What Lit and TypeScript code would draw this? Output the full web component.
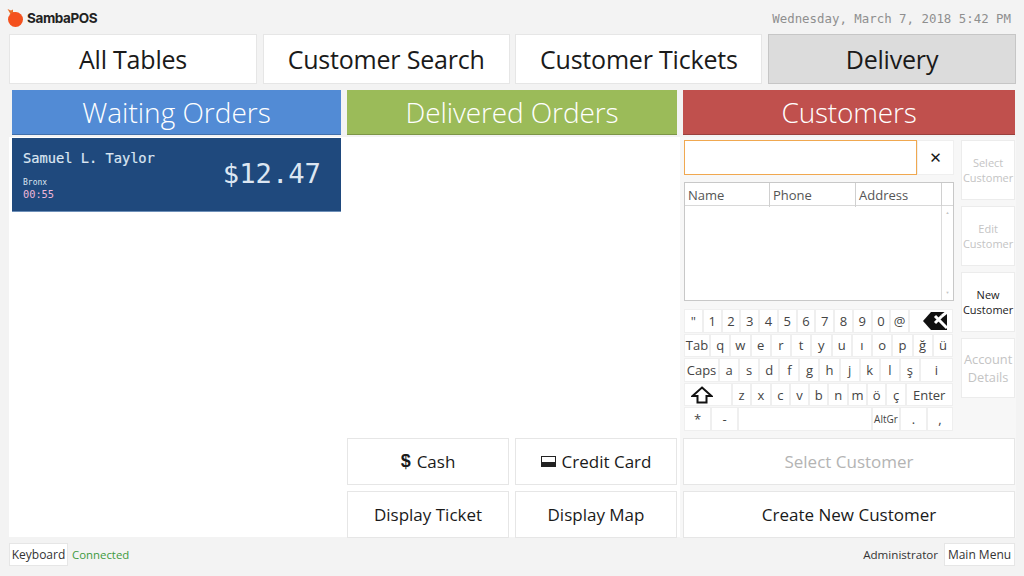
import { LitElement, html, css } from "lit";
import { customElement } from "lit/decorators.js";

type K = [string, number, string?];
const ROWS: K[][] = [
  [['"', 18.75], ...("1234567890@".split("").map((c) => [c, 18.75] as K)), ["⌫", 44, "bs"]],
  [["Tab", 26], ...("qwertyuıopğü".split("").map((c) => [c, 20.25] as K))],
  [["Caps", 35], ...("asdfghjklş".split("").map((c) => [c, 20.1] as K)), ["i", 33]],
  [["⇧", 48, "sh"], ...("zxcvbnmöç".split("").map((c) => [c, 19.3] as K)), ["Enter", 47]],
  [["*", 27], ["-", 27], ["", 134], ["AltGr", 28, "ag"], [".", 27], [",", 26]],
];

@customElement("app-root")
export class AppRoot extends LitElement {
  static styles = css`
    :host { display: block; width: 1024px; height: 576px; background: #f3f3f3; overflow: hidden;
      font-family: "Open Sans", "Noto Sans", sans-serif; color: #1a1a1a; }
    * { box-sizing: border-box; }
    .top { height: 34px; display: flex; justify-content: space-between; padding: 8px 13px 0 7px; }
    .logo { display: flex; align-items: center; gap: 3px; height: 20px; font: 700 13.5px "Inter", "Open Sans", sans-serif; letter-spacing: -0.4px; color: #222; }
    .date { font: 12.4px "DejaVu Sans Mono", monospace; color: #8f8f8f; margin-top: 3px; }
    .nav { display: grid; grid-template-columns: 248px 247px 247px 248px; column-gap: 5.67px; padding-left: 9px; height: 50px; }
    .b { background: #fff; border: 1px solid #e6e6e6; display: flex; align-items: center; justify-content: center; text-align: center; }
    .nav .b { font-size: 25px; letter-spacing: -0.2px; }
    .nav .on { background: #dcdcdc; border-color: #c6c6c6; }
    .heads { display: grid; grid-template-columns: 329px 330px 332px; gap: 6px; margin: 6px 0 0 12px; height: 45px; }
    .h { color: #fff; font-size: 28px; font-weight: 300; display: flex; align-items: center; justify-content: center; border-bottom: 1px solid rgba(0,0,0,.2); }
    .blue { background: #528bd5; } .green { background: #9bbb59; letter-spacing: -0.1px; } .red { background: #c0504d; letter-spacing: -0.2px; }
    .main { display: grid; grid-template-columns: 333px 335px 1fr; margin: 2px 8px 0 9px; height: 400px; background: #fff; }
    .c1 { padding: 1px 0 0 3px; }
    .ticket { width: 329px; height: 74px; background: #1f497d; color: #dce6f2; border-bottom: 1px solid #6d8fb8; padding: 12px 20px 0 11px; display: flex; justify-content: space-between; font-family: "DejaVu Sans Mono", monospace; }
    .name { font-size: 13.7px; line-height: 16px; font-weight: 500; -webkit-text-stroke: 0.2px #dce6f2; }
    .city { font-size: 8px; line-height: 11px; margin-top: 11px; }
    .time { font-size: 10.3px; line-height: 13px; color: #f0b6d8; }
    .amount { font-size: 27.2px; margin-top: 8px; line-height: 32px; }
    .c2 { display: flex; flex-direction: column; justify-content: flex-end; padding: 0 0 0 5px; }
    .pay { display: grid; grid-template-columns: 162px 162px; gap: 6px; grid-auto-rows: 47px; }
    .pay .b { font-size: 17px; gap: 6px; }
    .dollar { font-weight: 700; font-family: "Liberation Sans", sans-serif; font-size: 18px; }
    .cc { width: 15px; height: 11px; border: 1px solid #222; border-bottom-width: 5px; background: #fff; display: block; }
    .c3 { background: #f7f7f7; margin-left: 3px; display: flex; flex-direction: column; padding: 3px 1px 0 3px; width: 336px; }
    .upper { display: flex; height: 298px; }
    .left { width: 271px; margin-left: 1px; }
    .search { display: flex; height: 35px; }
    .input { width: 233px; background: #fff; border: 1px solid #f0a850; }
    .x { width: 37px; background: #fff; border: 1px solid #efefef; display: flex; align-items: center; justify-content: center; font-size: 15px; font-weight: 700; font-family: "DejaVu Sans", sans-serif; }
    .table { margin-top: 7px; height: 119px; width: 270px; background: #fff; border: 1px solid #c8c8c8; display: flex; flex-direction: column; }
    .thead { display: grid; grid-template-columns: 85px 86px 86px 1fr; height: 23px; border-bottom: 1px solid #d8d8d8; font-size: 13px; line-height: 24px; color: #555; }
    .thead span { border-right: 1px solid #d0d0d0; padding-left: 3px; }
    .thead span:last-child { border-right: 0; }
    .tbody { flex: 1; display: flex; justify-content: flex-end; }
    .scroll { width: 12px; border-left: 1px solid #dcdcdc; display: flex; flex-direction: column; justify-content: space-between; align-items: center; color: #c4c4c4; font-size: 4px; line-height: 14px; }
    .kbd { margin-top: 8px; width: 270px; display: flex; flex-direction: column; gap: 1px; }
    .row { display: flex; height: 23.6px; }
    .key { background: #fff; border: 1px solid #efefef; display: flex; align-items: center; justify-content: center; font-size: 13px; color: #444; flex: none; }
    .ag { font-size: 10px; }
    .bs { justify-content: flex-end; padding-right: 5px; }
    .sh { padding-right: 12px; }
    .side { width: 54px; margin-left: 7px; display: flex; flex-direction: column; gap: 6px; }
    .side .b { height: 60px; font-size: 11px; line-height: 15px; color: #c4c4c4; border-color: #ececec; }
    .side .act { color: #222; }
    .side .big { font-size: 12.8px; line-height: 18px; }
    .acts { display: grid; grid-auto-rows: 47px; gap: 6px; width: 332px; }
    .acts .b { font-size: 17px; }
    .acts .dim { color: #b4b4b4; }
    .status { display: flex; justify-content: space-between; align-items: center; height: 39px; padding: 0 9px 4px 9px; font-size: 12px; }
    .status .group { display: flex; align-items: center; gap: 4px; }
    .status .b { height: 23px; font-size: 12px; color: #333; }
    .kb { width: 59px; }
    .mm { width: 71px; }
    .conn { color: #3d9a3d; font-size: 11.4px; }
    .admin { margin-right: 2px; color: #333; font-size: 11.6px; }
  `;

  render() {
    return html`
      <div class="top">
        <div class="logo">
          <svg width="17" height="20" viewBox="0 0 17 20">
            <path d="M0.5 1 L4 2.5 L6 1.5 L6 4 L9.5 4.5 L8 8 L4 7 Z" fill="#e8702a"/>
            <circle cx="8.5" cy="11.5" r="7.5" fill="#f4511e"/>
          </svg>
          <span>SambaPOS</span>
        </div>
        <div class="date">Wednesday, March 7, 2018 5:42 PM</div>
      </div>
      <div class="nav">
        <div class="b">All Tables</div>
        <div class="b">Customer Search</div>
        <div class="b">Customer Tickets</div>
        <div class="b on">Delivery</div>
      </div>
      <div class="heads">
        <div class="h blue">Waiting Orders</div>
        <div class="h green">Delivered Orders</div>
        <div class="h red">Customers</div>
      </div>
      <div class="main">
        <div class="c1">
          <div class="ticket">
            <div>
              <div class="name">Samuel L. Taylor</div>
              <div class="city">Bronx</div>
              <div class="time">00:55</div>
            </div>
            <div class="amount">$12.47</div>
          </div>
        </div>
        <div class="c2">
          <div class="pay">
            <div class="b"><span class="dollar">$</span>Cash</div>
            <div class="b"><span class="cc"></span>Credit Card</div>
            <div class="b">Display Ticket</div>
            <div class="b">Display Map</div>
          </div>
        </div>
        <div class="c3">
          <div class="upper">
            <div class="left">
              <div class="search"><div class="input"></div><div class="x">✕</div></div>
              <div class="table">
                <div class="thead"><span>Name</span><span>Phone</span><span>Address</span><span></span></div>
                <div class="tbody"><div class="scroll"><span>▲</span><span>▼</span></div></div>
              </div>
              <div class="kbd">
                ${ROWS.map((r) => html`<div class="row">${r.map(([t, w, kind]) => html`
                  <div class="key ${kind ?? ""}" style="width:${w}px">${kind === "bs"
                    ? html`<svg width="24" height="20" viewBox="0 0 24 20"><path d="M0 10 L8 1 H24 V19 H8 Z" fill="#111"/><path d="M12 5 L19 12 M19 5 L12 12 M19 12 L24 17 M19 5 L24 1" stroke="#fff" stroke-width="3"/></svg>`
                    : kind === "sh"
                    ? html`<svg width="22" height="18" viewBox="0 0 22 18"><path d="M11 1.5 L20.5 10 H15.5 V16.5 H6.5 V10 H1.5 Z" fill="#fff" stroke="#111" stroke-width="2"/></svg>`
                    : t}</div>`)}</div>`)}
              </div>
            </div>
            <div class="side">
              <div class="b">Select Customer</div>
              <div class="b">Edit Customer</div>
              <div class="b act">New Customer</div>
              <div class="b big">Account Details</div>
            </div>
          </div>
          <div class="acts">
            <div class="b dim">Select Customer</div>
            <div class="b">Create New Customer</div>
          </div>
        </div>
      </div>
      <div class="status">
        <div class="group"><div class="b kb">Keyboard</div><span class="conn">Connected</span></div>
        <div class="group"><span class="admin">Administrator</span><div class="b mm">Main Menu</div></div>
      </div>
    `;
  }
}
